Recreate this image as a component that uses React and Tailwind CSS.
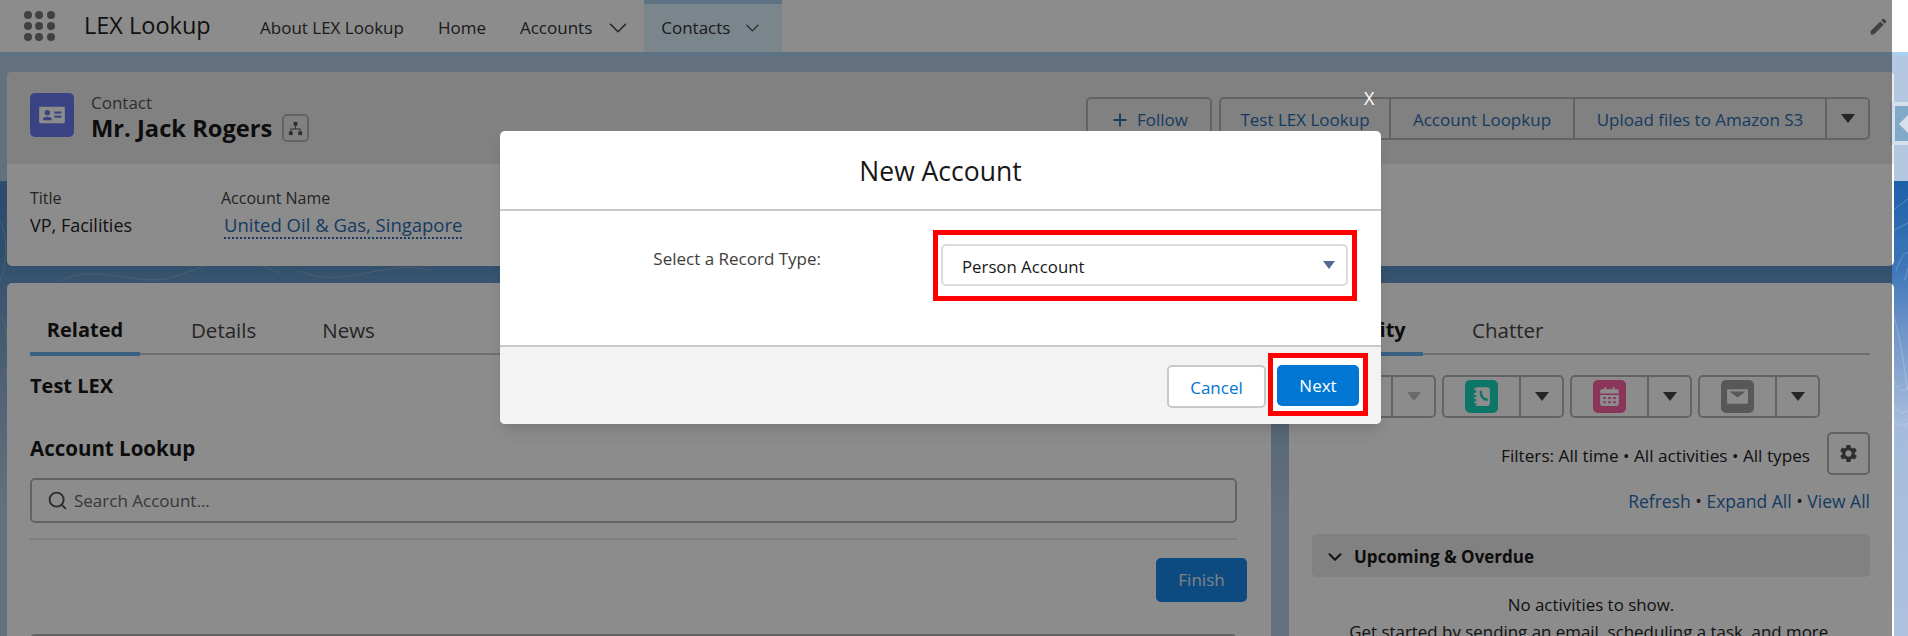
import React from "react";
import { ChevronDown, Plus, Search } from "lucide-react";
import { MdEdit, MdSettings } from "react-icons/md";

// small down triangle used in every split button
function Caret({ className = "border-t-[#444]" }) {
  return <span className={`inline-block w-0 h-0 border-x-[7px] border-x-transparent border-t-[9px] ${className}`} />;
}

function NavItem({ label, chevron, active }) {
  return (
    <div
      className={`h-full flex items-center text-[17px] text-[#333] border-t-[4px] ${
        active ? "bg-[#e0f2ff] border-[#a9d0ee] pl-[17px] pr-[18px] w-[138px] ml-[2px]" : "border-transparent"
      }`}
    >
      <span>{label}</span>
      {chevron && <ChevronDown className="ml-[11px] w-[30px] h-[30px] text-[#444]" strokeWidth={1.3} />}
    </div>
  );
}

function ActionGroup({ children, caretClass, dim }) {
  return (
    <div className="flex h-[43px] w-[122px] border-2 border-[#b5b5b5] rounded-[5px]">
      <div className="w-[77px] flex items-center justify-center border-r-2 border-[#b5b5b5]">{children}</div>
      <div className="flex-1 flex items-center justify-center">
        <Caret className={dim ? "border-t-[#c4c4c4]" : caretClass} />
      </div>
    </div>
  );
}

function IconTile({ bg, children }) {
  return (
    <div className={`w-[33px] h-[33px] rounded-[5px] flex items-center justify-center ${bg}`}>
      <svg viewBox="0 0 24 24" className="w-[25px] h-[25px]" fill="white">
        {children}
      </svg>
    </div>
  );
}

export default function App() {
  return (
    <div className="relative w-[1908px] h-[636px] overflow-hidden font-['Open_Sans',sans-serif] bg-[linear-gradient(to_bottom,#b6cce5_0px,#b6cce5_181px,#4f8cc8_181px,#5a90c4_262px,#6b9bca_285px,#9db9d8_420px,#b6cce5_510px)]">
      {/* right strip stays outside the backdrop */}
      <div className="absolute left-[1892px] top-0 w-[16px] h-full bg-[linear-gradient(to_bottom,#b4c8e2_0px,#b4c8e2_181px,#1c60a8_181px,#3f78ba_270px,#6e94c8_330px,#a5bbdb_420px,#aec2de_636px)]" />

      {/* contour lines of the background picture */}
      <svg className="absolute left-0 top-[181px] w-[1908px] h-[340px]" viewBox="0 0 1908 340" fill="none" stroke="white" strokeOpacity="0.22" strokeWidth="1">
        <path d="M0 40c10 20 6 50-4 70M-4 130c14 10 12 40 10 70" />
        <path d="M60 100c40-20 80 10 120-6s60-20 100-2M300 90c40 20 90-14 130 0" />
        <path d="M1892 30l16-12M1892 50l16-8M1896 90c10-30 20-20 8 10M1892 130c10 30 12 60 16 80" />
        <path d="M1894 200c4 10 10 12 14 6M1894 225c4 8 10 8 14 4M1894 240c4 6 10 6 14 2" />
      </svg>

      {/* global nav */}
      <div className="relative h-[52px] bg-white flex items-stretch pl-[24px] pr-[19px]">
        <div className="self-center grid grid-cols-3 gap-x-[4px] gap-y-[3px] w-[30px]">
          {[1, 2, 3, 4, 5, 6, 7, 8, 9].map((i) => (
            <span key={i} className="w-[8px] h-[8px] rounded-full bg-[#777]" />
          ))}
        </div>
        <div className="self-center ml-[30px] text-[23.5px] text-[#222] w-[176px]">LEX Lookup</div>
        <div className="flex items-stretch gap-[34px]">
          <NavItem label="About LEX Lookup" />
          <NavItem label="Home" />
          <NavItem label="Accounts" chevron />
        </div>
        <div className="ml-[9px]">
          <NavItem label="Contacts" chevron active />
        </div>
        <MdEdit className="ml-auto self-center w-[21px] h-[21px] text-[#777]" />
      </div>
      <div className="relative h-[4px] bg-[#a9d0ee]" />

      {/* record page */}
      <div className="relative pt-[16px] pl-[7px] pr-[14px]">
        {/* highlights panel */}
        <div className="h-[194px] bg-white rounded-[5px] flex flex-col">
          <div className="h-[92px] bg-[#ebebeb] rounded-t-[5px] flex pl-[23px] pr-[24px] pt-[21px]">
            <div className="w-[44px] h-[44px] rounded-[5px] bg-[#6a7af0] flex items-center justify-center">
              <svg viewBox="0 0 24 24" className="w-[28px] h-[28px]" fill="white">
                <path d="M2 5h20a1 1 0 0 1 1 1v12a1 1 0 0 1-1 1H2a1 1 0 0 1-1-1V6a1 1 0 0 1 1-1z" />
                <circle cx="8" cy="10" r="2.3" fill="#6a7af0" />
                <path d="M4 16.5c0-2 2-3 4-3s4 1 4 3z" fill="#6a7af0" />
                <rect x="14" y="9" width="6" height="1.8" fill="#6a7af0" />
                <rect x="14" y="12.5" width="6" height="1.8" fill="#6a7af0" />
              </svg>
            </div>
            <div className="ml-[17px]">
              <div className="text-[17px] leading-[20px] text-[#555]">Contact</div>
              <div className="flex items-center">
                <span className="text-[23.7px] leading-[30px] font-bold text-[#181818]">Mr. Jack Rogers</span>
                <span className="ml-[10px] w-[27px] h-[28px] border-2 border-[#b5b5b5] rounded-[5px] flex items-center justify-center">
                  <svg viewBox="0 0 16 16" className="w-[15px] h-[15px]" fill="#555">
                    <rect x="6" y="1" width="4" height="4" />
                    <rect x="1" y="11" width="4" height="4" />
                    <rect x="11" y="11" width="4" height="4" />
                    <path d="M7.5 5h1v3h5v3h-1V9h-9v2h-1V8h5z" />
                  </svg>
                </span>
              </div>
            </div>
            <div className="ml-auto flex items-start mt-[4px]">
              <div className="flex h-[43px] w-[126px] items-center justify-center gap-[7px] pt-[3px] border-2 border-[#b5b5b5] rounded-[5px] text-[17px] text-[#2a6cb0]">
                <Plus className="w-[20px] h-[20px]" strokeWidth={2.2} />
                Follow
              </div>
              <div className="ml-[7px] flex h-[43px] border-2 border-[#b5b5b5] rounded-[5px] text-[17px] text-[#2a6cb0]">
                <div className="w-[170px] pt-[3px] flex items-center justify-center border-r-2 border-[#b5b5b5]">Test LEX Lookup</div>
                <div className="w-[184px] pt-[3px] flex items-center justify-center border-r-2 border-[#b5b5b5]">Account Loopkup</div>
                <div className="w-[252px] pt-[3px] flex items-center justify-center border-r-2 border-[#b5b5b5]">Upload files to Amazon S3</div>
                <div className="w-[41px] flex items-center justify-center">
                  <Caret />
                </div>
              </div>
            </div>
          </div>
          <div className="flex pl-[23px] pt-[23px]">
            <div className="w-[191px]">
              <div className="text-[16px] leading-[22px] text-[#444]">Title</div>
              <div className="mt-[3px] text-[18px] leading-[26px] text-[#222]">VP, Facilities</div>
            </div>
            <div>
              <div className="text-[16px] leading-[22px] text-[#444]">Account Name</div>
              <div className="mt-[4px] ml-[3px] text-[18.5px] leading-[24px] text-[#2a6cb0] border-b-2 border-dotted border-[#2a6cb0] w-fit">
                United Oil &amp; Gas, Singapore
              </div>
            </div>
          </div>
        </div>

        {/* columns */}
        <div className="mt-[17px] flex gap-[18px] items-start">
          {/* left column */}
          <div className="w-[1264px] h-[360px] bg-white rounded-t-[5px] pl-[23px] pr-[34px]">
            <div className="flex h-[72px] border-b-2 border-[#c9c9c9]">
              <div className="w-[110px] h-[73px] pt-[34px] text-center font-bold text-[20px] leading-[26px] text-[#181818] border-b-[4px] border-[#6ab0f0]">
                Related
              </div>
              <div className="ml-[51px] pt-[34px] text-[20.5px] leading-[26px] text-[#444]">Details</div>
              <div className="ml-[66px] pt-[34px] text-[20.5px] leading-[26px] text-[#444]">News</div>
            </div>
            <div className="mt-[18px] font-bold text-[20px] leading-[26px] text-[#181818]">Test LEX</div>
            <div className="mt-[36px] font-bold text-[20.5px] leading-[26px] text-[#181818]">Account Lookup</div>
            <div className="mt-[17px] h-[45px] border-2 border-[#b5b5b5] rounded-[5px] bg-white flex items-center pl-[15px] text-[17px] text-[#666]">
              <Search className="w-[21px] h-[21px] text-[#555]" strokeWidth={2.2} />
              <span className="ml-[6px]">Search Account...</span>
            </div>
            <div className="mt-[15px] h-[2px] bg-[#e5e5e5]" />
            <div className="mt-[18px] flex justify-end -mr-[10px]">
              <div className="w-[91px] h-[44px] rounded-[5px] bg-[#1687e8] text-[#e8eef5] text-[17px] flex items-center justify-center">Finish</div>
            </div>
            <div className="mt-[32px] h-[10px] border-2 border-[#b5b5b5] rounded-t-[5px]" />
          </div>

          {/* right column */}
          <div className="w-[605px] h-[360px] bg-white rounded-t-[5px] pl-[23px] pr-[24px]">
            <div className="flex h-[72px] border-b-2 border-[#c9c9c9]">
              <div className="w-[111px] h-[73px] pt-[34px] text-center font-bold text-[20px] leading-[26px] text-[#181818] border-b-[4px] border-[#6ab0f0]">
                Activity
              </div>
              <div className="ml-[49px] pt-[34px] text-[20.5px] leading-[26px] text-[#444]">Chatter</div>
            </div>
            <div className="mt-[20px] flex gap-[6px] ml-[2px]">
              <ActionGroup dim>
                <IconTile bg="bg-[#38c76a]" />
              </ActionGroup>
              <ActionGroup caretClass="border-t-[#444]">
                <IconTile bg="bg-[#1bd8be]">
                  <path d="M7 3h11a2 2 0 0 1 2 2v14a2 2 0 0 1-2 2H7v-2.5H5v-2h2v-2H5v-2h2v-2H5v-2h2V6H5V4h2z" />
                  <path d="M11.5 7.5c-.6 4 2.2 7.3 5.5 7.5" fill="none" stroke="#1bd8be" strokeWidth="2.6" strokeLinecap="round" />
                </IconTile>
              </ActionGroup>
              <ActionGroup caretClass="border-t-[#444]">
                <IconTile bg="bg-[#ff62a4]">
                  <path d="M7 3h2v2h6V3h2v2h2a2 2 0 0 1 2 2v2H3V7a2 2 0 0 1 2-2h2z" />
                  <path d="M3 10.5h18V19a2 2 0 0 1-2 2H5a2 2 0 0 1-2-2zM6 12.5v2h2.5v-2zm4.7 0v2h2.6v-2zm4.8 0v2H18v-2zM6 16.5v2h2.5v-2zm4.7 0v2h2.6v-2zm4.8 0v2H18v-2z" fillRule="evenodd" />
                </IconTile>
              </ActionGroup>
              <ActionGroup caretClass="border-t-[#444]">
                <IconTile bg="bg-[#a0a0a0]">
                  <path d="M3 5h18a1 1 0 0 1 1 1v12a1 1 0 0 1-1 1H3a1 1 0 0 1-1-1V6a1 1 0 0 1 1-1zm1.5 2.4L12 13l7.5-5.6v-.2H4.5z" fillRule="evenodd" />
                </IconTile>
              </ActionGroup>
            </div>
            <div className="mt-[14px] flex justify-end items-center">
              <span className="text-[17.2px] text-[#222] mr-[17px] mt-[4px]">Filters: All time • All activities • All types</span>
              <div className="w-[43px] h-[43px] border-2 border-[#b5b5b5] rounded-[5px] flex items-center justify-center">
                <MdSettings className="w-[21px] h-[21px] text-[#555]" />
              </div>
            </div>
            <div className="mt-[14px] text-right text-[17.5px] leading-[24px] text-[#2a6cb0]">
              Refresh <span className="text-[#333]">•</span> Expand All <span className="text-[#333]">•</span> View All
            </div>
            <div className="mt-[21px] h-[43px] bg-[#ebebeb] rounded-[5px] flex items-center pl-[12px] pt-[2px] font-bold text-[17px] text-[#181818]">
              <ChevronDown className="w-[22px] h-[22px] text-[#222]" strokeWidth={2.2} />
              <span className="ml-[8px]">Upcoming &amp; Overdue</span>
            </div>
            <div className="mt-[14px] text-center text-[16.9px] leading-[27px] text-[#222]">
              <div>No activities to show.</div>
              <div>Get started by sending an email, scheduling a task, and more.</div>
            </div>
          </div>
        </div>
      </div>

      {/* docked tab on the right edge */}
      <div className="absolute left-[1890px] top-[102px] w-[18px] h-[43px] bg-[#7fa8c9] border-y-4 border-l-[5px] border-[#d5e0ec] rounded-l-[3px] flex items-center justify-end">
        <span className="w-0 h-0 border-y-[9px] border-y-transparent border-r-[9px] border-r-[#d5e0ec]" />
      </div>

      {/* modal backdrop stops short of the right edge */}
      <div className="absolute left-0 top-0 w-[1892px] h-full bg-black/45" />

      {/* close X */}
      <div className="absolute left-[1364px] top-[86px] text-white text-[18px] leading-[24px]">X</div>

      {/* modal */}
      <div className="absolute left-[500px] top-[131px] w-[881px] h-[293px] bg-white rounded-[5px] shadow-lg flex flex-col">
        <div className="h-[80px] pt-[3px] flex items-center justify-center border-b-2 border-[#c9c9c9] text-[26.5px] text-[#181818]">New Account</div>
        <div className="h-[136px] flex items-start border-b-2 border-[#c9c9c9]">
          <div className="w-[321px] text-right text-[17px] text-[#3e3e3c] mt-[36px] leading-[24px]">Select a Record Type:</div>
          <div className="ml-[112px] mt-[19px] w-[424px] h-[71px] border-[5px] border-[#ff0000] pl-[3px] pr-[4px] pt-[9px]">
            <div className="h-[42px] border-2 border-[#dddbda] rounded-[5px] bg-white flex items-center justify-between pl-[19px] pr-[11px] text-[16.8px] text-[#181818]">
              <span className="mt-[3px]">Person Account</span>
              <Caret className="border-t-[#54698d] !border-x-[6px] !border-t-[8px]" />
            </div>
          </div>
        </div>
        <div className="flex-1 bg-[#f3f3f3] rounded-b-[5px] flex justify-end items-start pr-[13px] pt-[6px]">
          <div className="mt-[12px] w-[99px] h-[43px] pt-[2px] border-2 border-[#c9c9c9] rounded-[5px] bg-white text-[#0176d3] text-[17px] flex items-center justify-center">Cancel</div>
          <div className="ml-[2px] w-[100px] h-[63px] border-[5px] border-[#ff0000] pl-[4px] pr-[4px] pt-[7px] bg-white">
            <div className="h-[41px] rounded-[5px] bg-[#0176d3] text-white text-[17px] flex items-center justify-center">Next</div>
          </div>
        </div>
      </div>
    </div>
  );
}
